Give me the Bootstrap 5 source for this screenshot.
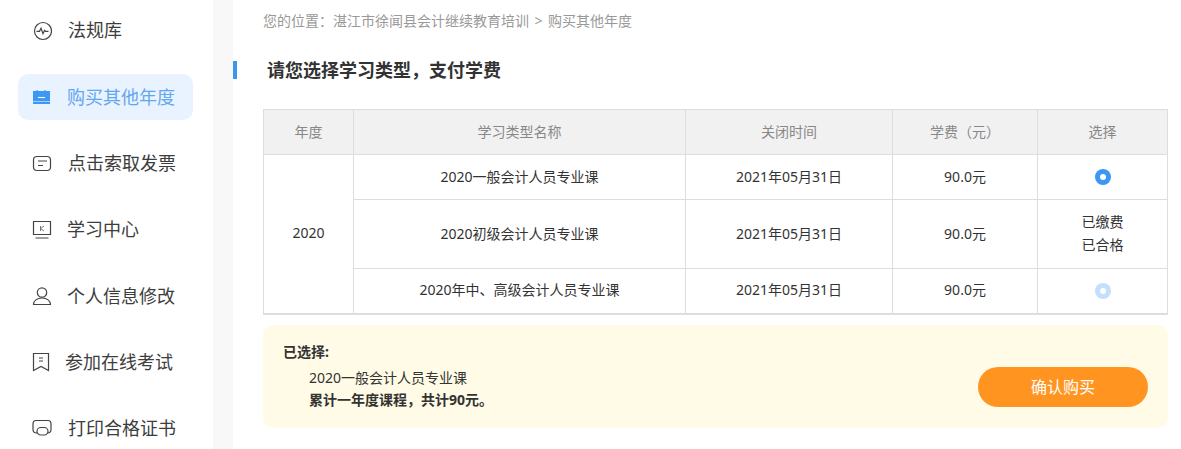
<!DOCTYPE html>
<html lang="zh-CN">
<head>
  <meta charset="UTF-8">
  <title>购买其他年度</title>
  <link rel="stylesheet" href="https://cdn.jsdelivr.net/npm/bootstrap@5.3.0/dist/css/bootstrap.min.css">
  <style>
    html, body { height: 449px; overflow: hidden; }
    body { background: #fff; color: #333; font-family: "Noto Sans", "Noto Sans CJK SC", sans-serif; font-size: 14px; }
    .page-wrap { width: 1181px; height: 449px; overflow: hidden; }
    .side-col { width: 213px; height: 449px; flex: none; padding: 7.7px 20px 0 18px; overflow: hidden; }
    .gap-col { width: 20px; height: 449px; flex: none; background: #f8f8f8; }
    .main-col { width: 948px; height: 449px; flex: none; padding-left: 30px; padding-right: 13px; }
    .side-item { height: 46px; margin-bottom: 20.33px; font-size: 18px; color: #3d3d3d; border-radius: 10px; padding-left: 14px; }
    .side-item svg { width: 20px; height: 20px; flex: none; margin-right: 16px; }
    .side-on { background: #e8f3ff; color: #64a6ee; }
    .nudge-l { margin-left: -1px; }
    .nudge-ll { margin-left: -3px; }
    .crumb { font-size: 14px; color: #999; padding-top: 12px; line-height: 18px; }
    .crumb-sep { margin: 0 5.5px; }
    .sec-head { margin-top: 31px; height: 18px; margin-left: -30px; font-size: 18px; font-weight: 700; color: #333; }
    .sec-bar { width: 4px; height: 18px; background: #3c96ee; margin-right: 30px; }
    .fee-table { width: 904px; margin-top: 30px; margin-bottom: 0; table-layout: fixed; border-color: #ddd; font-size: 14px; }
    .fee-table th, .fee-table td { text-align: center; vertical-align: middle; padding: 0 0 2px; border: 1px solid #ddd; color: #333; font-weight: 400; box-shadow: none; background: #fff; }
    .fee-table th { background: #f1f1f1; color: #888; height: 45px; }
    .fee-table td { height: 45px; }
    .fee-table .tall-cell { height: 69px; line-height: 23px; }
    .fee-table tbody tr:last-child td, .fee-table .year-cell { border-bottom: 2px solid #ddd; }
    .pick-dot { display: block; width: 16px; height: 16px; margin: 2px auto 0; border-radius: 50%; background: #3c96f4; position: relative; }
    .pick-dot::after { content: ""; position: absolute; left: 5px; top: 5px; width: 6px; height: 6px; background: #fff; border-radius: 50%; }
    .pick-off { background: #c4dffb; }
    .pay-box { width: 905px; height: 103px; margin-top: 10px; background: #fffbe6; border-radius: 10px; padding: 0 20px; }
    .pay-title { font-size: 14px; font-weight: 700; line-height: 20px; }
    .pay-lines { padding-left: 26px; font-size: 14px; line-height: 22px; margin-top: 5px; }
    .pay-sum { font-size: 14px; font-weight: 700; }
    .buy-btn { width: 170px; height: 40px; margin-top: 21px; border: 0; border-radius: 20px; background: #ff9421; color: #fff; font-size: 16px; padding: 0; }
    .buy-btn:hover { background: #ff9421; color: #fff; }
  </style>
</head>
<body>
  <div class="page-wrap d-flex">
    <div class="side-col">
      <div class="side-item d-flex align-items-center">
        <svg viewBox="0 0 20 20" fill="none" stroke="#444" stroke-width="1.2"><circle cx="11" cy="10" r="8.5"/><path d="M4.500 10.300h3l1.500-3 2 5.400 1.600-3.400.8 1h3.100"/></svg>
        <span>法规库</span>
      </div>
      <div class="side-item side-on d-flex align-items-center">
        <svg viewBox="0 0 20 20"><path fill="#3c98f2" d="M1 4h3.500V3h1.200v1h6.600V3h1.200v1H18v13H1z"/><path stroke="#fff" stroke-width="1.100" d="M6 10.500h7"/><path stroke="#9cd0ff" stroke-width="1" d="M1 14.500h17"/></svg>
        <span class="nudge-l">购买其他年度</span>
      </div>
      <div class="side-item d-flex align-items-center">
        <svg viewBox="0 0 20 20" fill="none" stroke="#444" stroke-width="1.2"><rect x="1.500" y="3.500" width="17" height="14" rx="3.500"/><path d="M6 8h9M6 12.500h5"/></svg>
        <span>点击索取发票</span>
      </div>
      <div class="side-item d-flex align-items-center">
        <svg viewBox="0 0 20 20" fill="none" stroke="#444" stroke-width="1.2"><path d="M1.500 1.500h17v13h-17zM3.500 18h13"/><path stroke="#777" stroke-width="1" d="M8.500 6v5M12 6L8.500 8.500 12 11"/></svg>
        <span class="nudge-l">学习中心</span>
      </div>
      <div class="side-item d-flex align-items-center">
        <svg viewBox="0 0 20 20" fill="none" stroke="#444" stroke-width="1.2"><circle cx="10" cy="6.500" r="4.700"/><path d="M1.500 18.500c0-3.700 3.500-6.500 8.500-6.500s8.500 2.800 8.500 6.500z"/></svg>
        <span class="nudge-l">个人信息修改</span>
      </div>
      <div class="side-item d-flex align-items-center">
        <svg viewBox="0 0 20 20" fill="none" stroke="#444" stroke-width="1.2"><path d="M1.500 1.500h15v17L9 14.500l-7.500 4z"/><path stroke-width="1" d="M7 6h4M7 9h4"/></svg>
        <span class="nudge-ll">参加在线考试</span>
      </div>
      <div class="side-item d-flex align-items-center">
        <svg viewBox="0 0 20 20" fill="none" stroke="#444" stroke-width="1.2"><path d="M5 14c-2.500 0-4-1.200-4-3.500V5c0-2 1-3.500 3-3.500h12c2 0 3 1.500 3 3.500v5.500c0 2.300-1.500 3.500-3.500 3.500"/><rect x="5" y="8.500" width="11" height="7.500" rx="3.700"/></svg>
        <span>打印合格证书</span>
      </div>
    </div>
    <div class="gap-col"></div>
    <div class="main-col">
      <div class="crumb">您的位置：湛江市徐闻县会计继续教育培训<span class="crumb-sep">&gt;</span>购买其他年度</div>
      <div class="sec-head d-flex align-items-center">
        <span class="sec-bar"></span>
        <span>请您选择学习类型，支付学费</span>
      </div>
      <table class="table table-bordered fee-table">
        <colgroup>
          <col style="width:90px"><col style="width:332px"><col style="width:207px"><col style="width:145px"><col style="width:130px">
        </colgroup>
        <thead>
          <tr><th>年度</th><th>学习类型名称</th><th>关闭时间</th><th>学费（元）</th><th>选择</th></tr>
        </thead>
        <tbody>
          <tr>
            <td rowspan="3" class="year-cell">2020</td>
            <td>2020一般会计人员专业课</td><td>2021年05月31日</td><td>90.0元</td>
            <td><span class="pick-dot"></span></td>
          </tr>
          <tr>
            <td class="tall-cell">2020初级会计人员专业课</td><td>2021年05月31日</td><td>90.0元</td>
            <td class="tall-cell">已缴费<br>已合格</td>
          </tr>
          <tr>
            <td>2020年中、高级会计人员专业课</td><td>2021年05月31日</td><td>90.0元</td>
            <td><span class="pick-dot pick-off"></span></td>
          </tr>
        </tbody>
      </table>
      <div class="pay-box d-flex align-items-center justify-content-between">
        <div>
          <div class="pay-title">已选择:</div>
          <div class="pay-lines">
            <div>2020一般会计人员专业课</div>
            <div class="pay-sum">累计一年度课程，共计90元。</div>
          </div>
        </div>
        <button type="button" class="btn buy-btn">确认购买</button>
      </div>
    </div>
  </div>
  <script src="https://cdn.jsdelivr.net/npm/bootstrap@5.3.0/dist/js/bootstrap.bundle.min.js"></script>
</body>
</html>
